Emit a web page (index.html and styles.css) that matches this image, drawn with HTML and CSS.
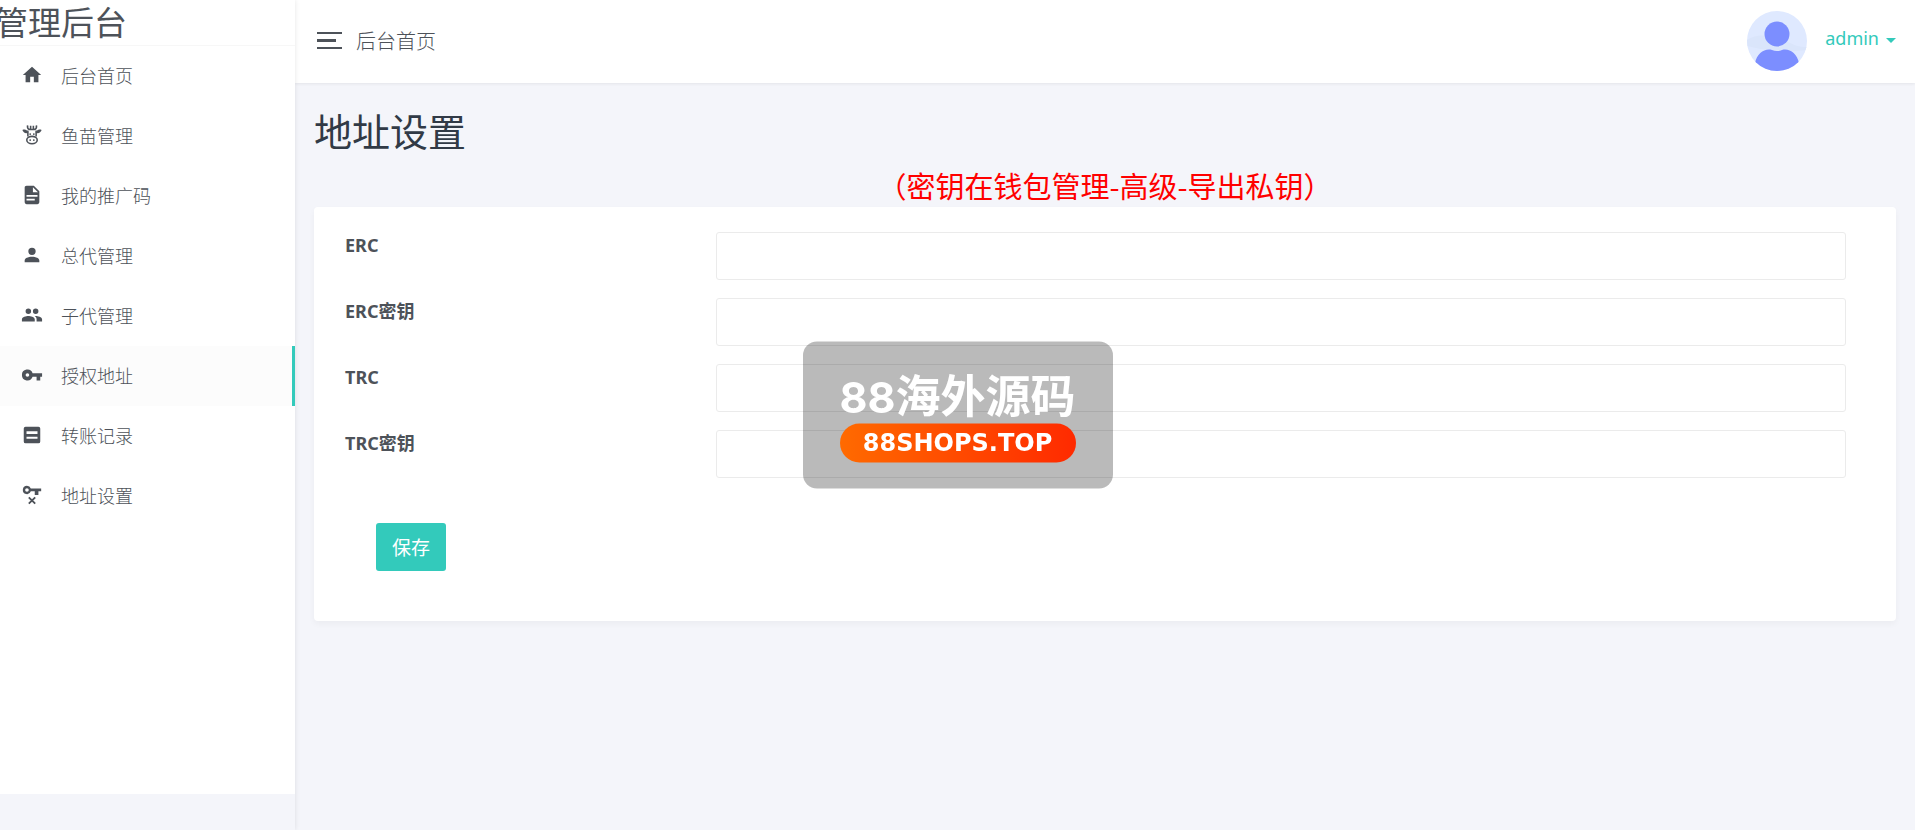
FILE: index.html
```html
<!DOCTYPE html>
<html lang="zh-CN">
<head>
<meta charset="utf-8">
<title>地址设置</title>
<link rel="stylesheet" href="styles.css">
</head>
<body>
<div class="layout">
  <aside class="sidebar">
    <div class="sidebar-panel">
      <div class="brand">管理后台</div>
      <nav class="nav">
        <a class="nav-item" href="#"><svg class="icon" viewBox="0 0 24 24"><path d="M10 20v-6h4v6h5v-8h3L12 3 2 12h3v8z"/></svg>后台首页</a>
        <a class="nav-item" href="#"><svg class="icon" viewBox="0 0 24 24"><path d="M1.500 6.500c2-.8 3.500-.5 5 .5l1.500 2.500c-3 1.300-5.500 0-6.500-3zM22.500 6.500c-2-.8-3.500-.5-5 .5L16 9.500c3 1.300 5.500 0 6.500-3z"/><g fill="none" stroke="currentColor" stroke-width="1.700"><path d="M7.200 1.500C6.700 4 7.500 5.500 9.500 6h5c2-.5 2.800-2 2.300-4.500M7.500 7v6.500M16.500 7v6.500M10.500 2v3.500M13.500 2v3.500"/><ellipse cx="12" cy="17.500" rx="5.700" ry="4"/></g><circle cx="10" cy="11" r="1"/><circle cx="14" cy="11" r="1"/><circle cx="10" cy="17.500" r="1"/><circle cx="14" cy="17.500" r="1"/></svg>鱼苗管理</a>
        <a class="nav-item" href="#"><svg class="icon" viewBox="0 0 24 24"><path d="M13 9h5.500L13 3.500V9M6 2h8l6 6v12a2 2 0 0 1-2 2H6a2 2 0 0 1-2-2V4c0-1.110.89-2 2-2m9 16v-2H6v2h9m3-4v-2H6v2h12z"/></svg>我的推广码</a>
        <a class="nav-item" href="#"><svg class="icon" viewBox="0 0 24 24"><path d="M12 4a4 4 0 1 1 0 8 4 4 0 0 1 0-8m0 10c4.420 0 8 1.790 8 4v2H4v-2c0-2.210 3.580-4 8-4z"/></svg>总代管理</a>
        <a class="nav-item" href="#"><svg class="icon" viewBox="0 0 24 24"><path d="M16 13c-.29 0-.62.020-.97.050 1.160.84 1.970 1.950 1.970 3.450V19h6v-2.500c0-2.330-4.670-3.500-7-3.500m-8 0c-2.330 0-7 1.170-7 3.500V19h14v-2.500c0-2.330-4.670-3.500-7-3.500m0-2a3 3 0 1 0 0-6 3 3 0 0 0 0 6m8 0a3 3 0 1 0 0-6 3 3 0 0 0 0 6z"/></svg>子代管理</a>
        <a class="nav-item active" href="#"><svg class="icon" viewBox="0 0 24 24"><path d="M7 14a2 2 0 1 1 0-4 2 2 0 0 1 0 4m5.650-4A5.990 5.990 0 0 0 1 12a6 6 0 0 0 11.650 2H17v4h4v-4h2v-4H12.650z"/></svg>授权地址</a>
        <a class="nav-item" href="#"><svg class="icon" viewBox="0 0 24 24"><path fill-rule="evenodd" d="M5 3h14a2 2 0 0 1 2 2v14a2 2 0 0 1-2 2H5a2 2 0 0 1-2-2V5a2 2 0 0 1 2-2zm1 5v3h12V8zm0 6v2h12v-2z"/></svg>转账记录</a>
        <a class="nav-item" href="#"><svg class="icon" viewBox="0 0 24 24"><path d="M6.500 2a4.500 4.500 0 1 0 4.240 6H15v4h4V8h3V5H10.740A4.500 4.500 0 0 0 6.500 2m0 2.500a2 2 0 1 1 0 4 2 2 0 0 1 0-4z"/><path d="m8.500 14.500 7 7m0-7-7 7" fill="none" stroke="currentColor" stroke-width="2"/></svg>地址设置</a>
      </nav>
    </div>
  </aside>
  <div class="page">
    <header class="topbar">
      <button class="toggler" type="button" aria-label="菜单"><span class="bar"></span><span class="bar short"></span><span class="bar"></span></button>
      <span class="crumb">后台首页</span>
      <a class="user" href="#">
        <svg class="avatar" viewBox="0 0 60 60"><defs><clipPath id="disc"><circle cx="30" cy="30" r="30"/></clipPath></defs><g clip-path="url(#disc)"><path fill="#dfe9ff" d="M0 0h60v60H0z"/><path fill="#dae5fb" d="M0 29c12-7 19-4 30-2s18 10 30 9v3c-18 2-42 1-60-4z"/><circle cx="30" cy="23" r="12.500" fill="#7c8eff"/><path fill="#7c8eff" d="M8 60V52c2-10 10-15 17-13q5 2 10 0c7-2 15 3 17 13v8z"/></g></svg>
        <span class="user-name">admin</span><span class="caret"></span>
      </a>
    </header>
    <main class="content">
      <h1 class="title">地址设置</h1>
      <p class="notice">（密钥在钱包管理-高级-导出私钥）</p>
      <form class="card">
        <div class="row"><label for="erc">ERC</label><input id="erc" type="text"></div>
        <div class="row"><label for="erc-key">ERC密钥</label><input id="erc-key" type="text"></div>
        <div class="row"><label for="trc">TRC</label><input id="trc" type="text"></div>
        <div class="row"><label for="trc-key">TRC密钥</label><input id="trc-key" type="text"></div>
        <button class="save" type="button">保存</button>
      </form>
    </main>
  </div>
</div>
<div class="watermark">
  <div class="mark-name"><span class="mark-num">88</span>海外源码</div>
  <div class="mark-site">88SHOPS.TOP</div>
</div>
</body>
</html>
```
FILE: styles.css
```css
* { box-sizing: border-box; }
body {
  margin: 0;
  background: #f4f5fa;
  color: #4d5259;
  font-family: "Noto Sans", "Noto Sans CJK SC", sans-serif;
  font-size: 17px;
  font-weight: 300;
}
a { color: inherit; text-decoration: none; }
.layout { display: flex; min-height: 100vh; }
.sidebar {
  flex: 0 0 295px;
  position: relative;
  box-shadow: 0 0 5px rgba(0, 0, 0, .1);
}
.sidebar-panel { background: #fff; height: calc(100vh - 36px); }
.brand {
  height: 46px;
  margin-left: -5px;
  border-bottom: 1px solid #f7f7f7;
  font-family: "Noto Sans CJK SC", sans-serif;
  font-size: 33px;
  font-weight: 400;
  line-height: 43px;
  white-space: nowrap;
}
.nav-item {
  display: flex;
  align-items: center;
  gap: 18px;
  height: 60px;
  padding: 0 0 2px 21px;
  border-right: 3px solid transparent;
  font-family: "Noto Sans CJK SC", sans-serif;
  font-size: 18px;
}
.nav-item.active { background: #fcfcfc; border-right-color: #33cabb; }
.icon { width: 22px; height: 22px; fill: currentColor; }
.page { flex: 1; min-width: 0; }
.topbar {
  display: flex;
  align-items: center;
  height: 83px;
  padding: 0 19px 2px 22px;
  background: #fff;
  box-shadow: 0 1px 3px rgba(0, 0, 0, .07);
}
.toggler {
  display: flex;
  flex-direction: column;
  gap: 5px;
  width: 25px;
  padding: 0;
  border: 0;
  background: none;
}
.bar { width: 25px; height: 2px; background: #4d5259; }
.bar.short { width: 19px; height: 3px; }
.crumb { margin-left: 14px; font-family: "Noto Sans CJK SC", sans-serif; font-size: 20px; }
.user { display: flex; align-items: center; margin-left: auto; color: #33cabb; }
.avatar { width: 60px; height: 60px; margin-right: 18px; }
.user-name { font-size: 18px; font-weight: 400; padding-bottom: 6px; }
.caret { margin-left: 7px; border: 5px solid transparent; border-top-color: #33cabb; border-bottom: 0; }
.content { padding: 17px 19px; }
.title { margin: 0; color: #313a46; font-family: "Noto Sans CJK SC", sans-serif; font-size: 38px; font-weight: 400; line-height: 60px; }
.notice { margin: 5px 0 2px; color: #f00; font-family: "Noto Sans CJK SC", sans-serif; font-size: 29px; font-weight: 400; line-height: 40px; text-align: center; }
.card {
  padding: 25px 50px 50px 31px;
  border-radius: 4px;
  background: #fff;
  box-shadow: 0 3px 6px rgba(0, 0, 0, .04);
}
.row { display: grid; grid-template-columns: 371px 1fr; margin-bottom: 18px; }
.row label { font-weight: 700; font-size: 18px; line-height: 26px; }
.row input {
  width: 100%;
  height: 48px;
  padding: 6px 15px;
  border: 1px solid #ebebeb;
  border-radius: 3px;
  background: #fff;
  font: inherit;
}
.save {
  display: block;
  height: 48px;
  margin: 45px 0 0 31px;
  padding: 0 16px 2px;
  border: 0;
  border-radius: 3px;
  background: #33cabb;
  color: #fff;
  font-family: "Noto Sans CJK SC", sans-serif;
  font-size: 19px;
}
.watermark {
  position: fixed;
  top: 50%;
  left: 50%;
  transform: translate(-50%, -50%);
  padding: 26px 37px;
  border-radius: 14px;
  background: rgba(0, 0, 0, .27);
  color: #fff;
  font-weight: 700;
  text-align: center;
  white-space: nowrap;
}
.mark-name { height: 56px; font-family: "Noto Sans CJK SC", sans-serif; font-size: 45px; line-height: 52px; }
.mark-num { font-family: Inter, sans-serif; font-size: 43px; }
.mark-site {
  border-radius: 20px;
  background: linear-gradient(90deg, #ff6a00, #ff2a00);
  font-family: "DejaVu Sans", sans-serif;
  font-size: 24px;
  line-height: 39px;
}
```
